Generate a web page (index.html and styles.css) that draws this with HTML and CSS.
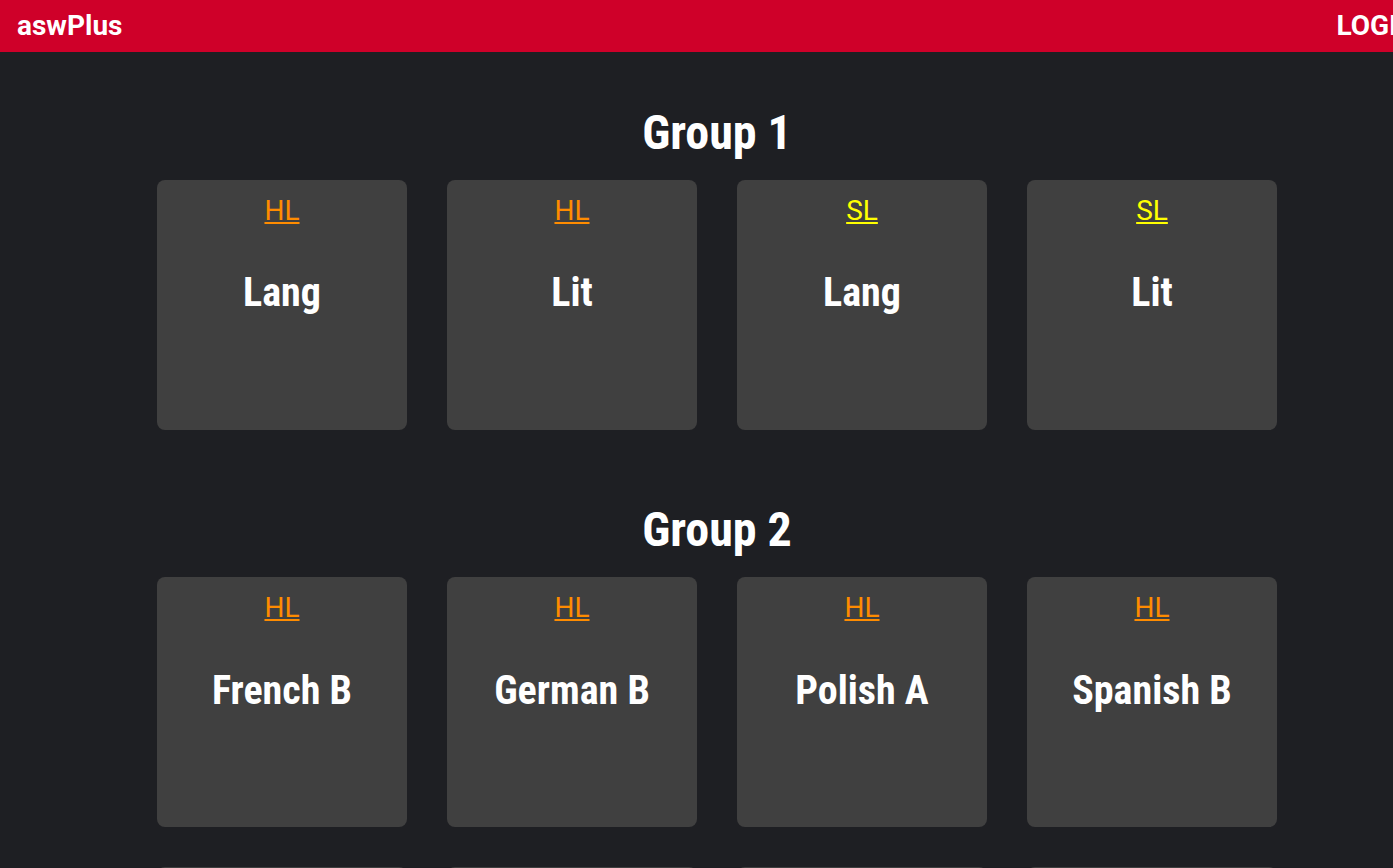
FILE: index.html
```html
<!DOCTYPE html>
<html lang="en">
<head>
<meta charset="utf-8">
<title>aswPlus</title>
<link rel="stylesheet" href="styles.css">
</head>
<body>
<div class="page">
  <header class="topbar">
    <a class="brand" href="#">aswPlus</a>
    <a class="login" href="#">LOGIN</a>
  </header>
  <main class="content">
    <section class="group">
      <h1 class="group-title">Group 1</h1>
      <div class="cards">
        <div class="card"><a class="level hl" href="#">HL</a><div class="subject">Lang</div></div>
        <div class="card"><a class="level hl" href="#">HL</a><div class="subject">Lit</div></div>
        <div class="card"><a class="level sl" href="#">SL</a><div class="subject">Lang</div></div>
        <div class="card"><a class="level sl" href="#">SL</a><div class="subject">Lit</div></div>
      </div>
    </section>
    <section class="group">
      <h1 class="group-title">Group 2</h1>
      <div class="cards">
        <div class="card"><a class="level hl" href="#">HL</a><div class="subject">French B</div></div>
        <div class="card"><a class="level hl" href="#">HL</a><div class="subject">German B</div></div>
        <div class="card"><a class="level hl" href="#">HL</a><div class="subject">Polish A</div></div>
        <div class="card"><a class="level hl" href="#">HL</a><div class="subject">Spanish B</div></div>
        <div class="card"><a class="level sl" href="#">SL</a><div class="subject">French B</div></div>
        <div class="card"><a class="level sl" href="#">SL</a><div class="subject">German B</div></div>
        <div class="card"><a class="level sl" href="#">SL</a><div class="subject">Polish A</div></div>
        <div class="card"><a class="level sl" href="#">SL</a><div class="subject">Spanish B</div></div>
      </div>
    </section>
  </main>
</div>
</body>
</html>
```

FILE: styles.css
```css
html, body {
  margin: 0;
  padding: 0;
  background: #1e1f23;
  overflow: hidden;
}
body {
  font-family: Roboto, "Liberation Sans", sans-serif;
  color: #ffffff;
}
.page {
  width: 1434px;
}
.topbar {
  height: 52px;
  background: #cf0029;
  display: flex;
  align-items: center;
  justify-content: space-between;
  padding: 0 17px;
}
.brand, .login {
  color: #ffffff;
  text-decoration: none;
  font-weight: 700;
  font-size: 28px;
  line-height: 1;
}
.content {
  display: flex;
  flex-direction: column;
  align-items: center;
}
.group {
  display: flex;
  flex-direction: column;
  align-items: center;
}
.group-title {
  margin: 52px 0 18px;
  font-size: 48px;
  line-height: 1.2;
  font-weight: 700;
  font-stretch: condensed;
}
.group + .group .group-title {
  margin: 71px 0 19px;
}
.cards {
  display: grid;
  grid-template-columns: repeat(4, 250px);
  gap: 40px;
}
.card {
  height: 250px;
  background: #404040;
  border-radius: 8px;
  display: flex;
  flex-direction: column;
  align-items: center;
  padding-top: 14px;
  box-sizing: border-box;
}
.level {
  font-size: 28px;
  line-height: 1.2;
  font-weight: 400;
  text-decoration: underline;
}
.level.hl { color: #ff8c00; }
.level.sl { color: #ffff00; }
.subject {
  margin-top: 42px;
  font-size: 40px;
  line-height: 1.2;
  font-weight: 700;
  font-stretch: condensed;
}
```
